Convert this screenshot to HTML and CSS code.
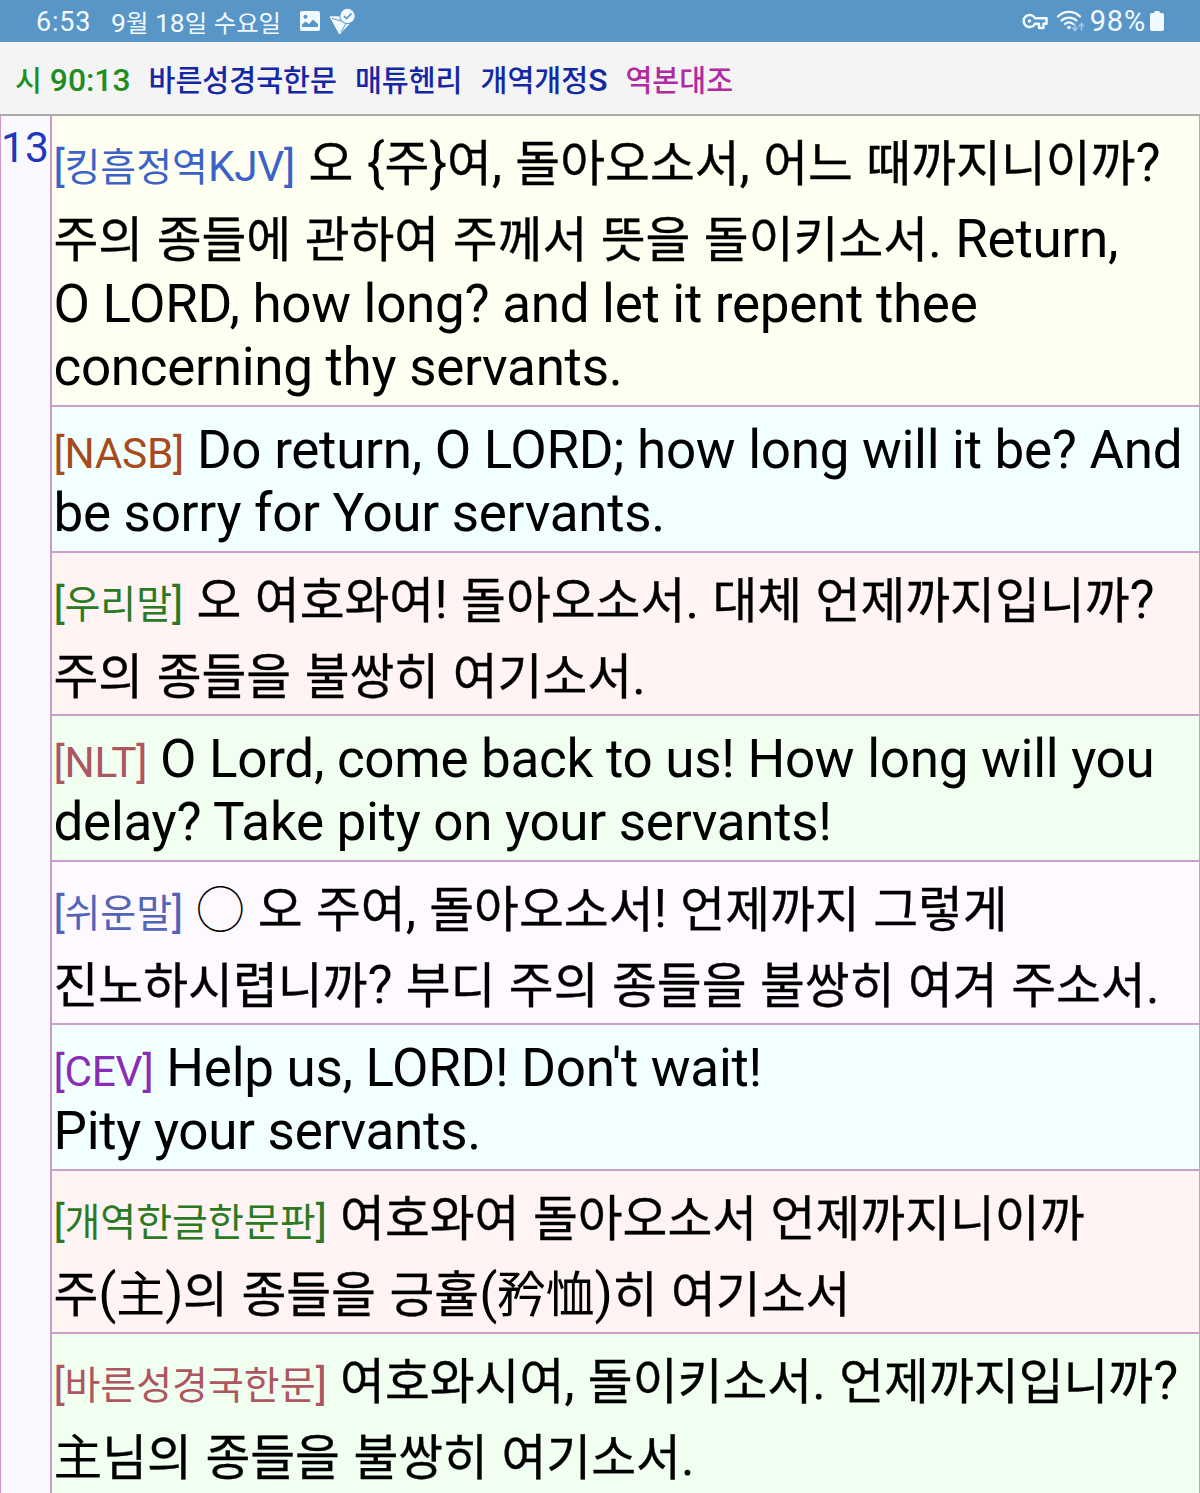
FILE: index.html
```
<!DOCTYPE html>
<html lang="ko">
<head>
    <meta charset="UTF-8">
    <meta name="viewport" content="width=device-width, initial-scale=1.0">
    <title>시 90:13 역본대조</title>
    <link rel="stylesheet" href="styles.css">
</head>
<body>

    <div class="status-bar">
        <span class="clock">6:53</span>
        <span class="date">9<span class="k">월</span> 18<span class="k">일</span> <span class="k">수요일</span></span>
        <svg class="icon-image" width="22" height="22" viewBox="0 0 22 22">
            <path fill="#f2faff" fill-rule="evenodd" d="M3 1h16a2 2 0 0 1 2 2v16a2 2 0 0 1-2 2H3a2 2 0 0 1-2-2V3a2 2 0 0 1 2-2zM3 14.500v2.500h16v-3l-5-4.500-4 4.500-3.500-2.500zM6.500 4.800a2 2 0 1 0 .01 0z"/>
        </svg>
        <svg class="icon-send" width="28" height="28" viewBox="0 0 28 28">
            <path d="M2.500 10h12l6 7-9 9.500z" fill="#f2faff" stroke="#f2faff" stroke-width="1.500" stroke-linejoin="round"/>
            <path d="M4 11.500l9 2.500M13 25l5-8.500" fill="none" stroke="#5996c8" stroke-width="1"/>
            <circle cx="19.500" cy="9" r="8.200" fill="#5996c8"/>
            <circle cx="19.500" cy="9" r="7.200" fill="#f2faff"/>
            <path d="M16 9l2.500 2.500 5-5" fill="none" stroke="#5996c8" stroke-width="1.700"/>
        </svg>
        <div class="status-right">
            <svg class="icon-key" width="27" height="18" viewBox="0 0 27 18" fill="none" stroke="#f2faff" stroke-width="2.500">
                <path d="M13 6.300A6 6 0 1 0 13 11.700H17V16H21.500V11.700H24.500V6.300z" stroke-linejoin="round"/>
                <circle cx="7.500" cy="9" r="1.800" fill="#f2faff" stroke="none"/>
            </svg>
            <svg class="icon-wifi" width="29" height="24" viewBox="0 0 29 24" fill="none" stroke="#f2faff" stroke-width="2.300" stroke-linecap="round">
                <path d="M2 7.500a15.500 15.500 0 0 1 22 0M5.500 11.500a11 11 0 0 1 15 0M9 15a6 6 0 0 1 8 0"/>
                <circle cx="13" cy="18.500" r="1.800" fill="#f2faff" stroke="none"/>
                <path d="M19 15v6M16.800 19l2.200 2.500 2.200-2.500M25.500 21v-6M23.300 17l2.200-2.500 2.200 2.500" stroke="#a3c5e6" stroke-width="1.600"/>
            </svg>
            <span class="percent">98%</span>
            <svg class="icon-battery" width="14" height="20" viewBox="0 0 14 20">
                <path fill="#f2faff" d="M4 2a2 2 0 0 1 2-2h2a2 2 0 0 1 2 2h2a2 2 0 0 1 2 2v14a2 2 0 0 1-2 2H2a2 2 0 0 1-2-2V4a2 2 0 0 1 2-2z"/>
            </svg>
        </div>
    </div>

    <div class="nav">
        <span class="ref"><span class="k">시</span> 90:13</span>
        <span class="book"><span class="k">바른성경국한문</span></span>
        <span class="book"><span class="k">매튜헨리</span></span>
        <span class="book"><span class="k">개역개정</span>S</span>
        <span class="current"><span class="k">역본대조</span></span>
    </div>

    <div class="compare">
        <div class="verse-no">13</div>
        <div class="versions">
            <div class="version kr ivory">
                <div class="line ko"><span class="tag blue">[<span class="k">킹흠정역</span>KJV]</span> <span class="k">오</span> {<span class="k">주</span>}<span class="k">여</span>, <span class="k">돌아오소서</span>, <span class="k">어느</span> <span class="k">때까지니이까</span>?</div>
                <div class="line ko"><span class="k">주의</span> <span class="k">종들에</span> <span class="k">관하여</span> <span class="k">주께서</span> <span class="k">뜻을</span> <span class="k">돌이키소서</span>. Return,</div>
                <div class="line after-ko">O LORD, how long? and let it repent thee</div>
                <div class="line">concerning thy servants.</div>
            </div>
            <div class="version azure">
                <div class="line"><span class="tag brown">[NASB]</span> Do return, O LORD; how long will it be? And</div>
                <div class="line">be sorry for Your servants.</div>
            </div>
            <div class="version kr pink">
                <div class="line ko"><span class="tag green">[<span class="k">우리말</span>]</span> <span class="k">오</span> <span class="k">여호와여</span>! <span class="k">돌아오소서</span>. <span class="k">대체</span> <span class="k">언제까지입니까</span>?</div>
                <div class="line ko"><span class="k">주의</span> <span class="k">종들을</span> <span class="k">불쌍히</span> <span class="k">여기소서</span>.</div>
            </div>
            <div class="version mint">
                <div class="line"><span class="tag rose">[NLT]</span> O Lord, come back to us! How long will you</div>
                <div class="line">delay? Take pity on your servants!</div>
            </div>
            <div class="version kr lilac">
                <div class="line ko"><span class="tag indigo">[<span class="k">쉬운말</span>]</span> <span class="k circle">◯</span> <span class="k">오</span> <span class="k">주여</span>, <span class="k">돌아오소서</span>! <span class="k">언제까지</span> <span class="k">그렇게</span></div>
                <div class="line ko"><span class="k">진노하시렵니까</span>? <span class="k">부디</span> <span class="k">주의</span> <span class="k">종들을</span> <span class="k">불쌍히</span> <span class="k">여겨</span> <span class="k">주소서</span>.</div>
            </div>
            <div class="version azure">
                <div class="line"><span class="tag purple">[CEV]</span> Help us, LORD! Don't wait!</div>
                <div class="line">Pity your servants.</div>
            </div>
            <div class="version kr pink">
                <div class="line ko"><span class="tag green">[<span class="k">개역한글한문판</span>]</span> <span class="k">여호와여</span> <span class="k">돌아오소서</span> <span class="k">언제까지니이까</span></div>
                <div class="line ko"><span class="k">주</span>(<span class="k hanja">主</span>)<span class="k">의</span> <span class="k">종들을</span> <span class="k">긍휼</span>(<span class="k hanja">矜恤</span>)<span class="k">히</span> <span class="k">여기소서</span></div>
            </div>
            <div class="version kr mint">
                <div class="line ko"><span class="tag rose">[<span class="k">바른성경국한문</span>]</span> <span class="k">여호와시여</span>, <span class="k">돌이키소서</span>. <span class="k">언제까지입니까</span>?</div>
                <div class="line ko"><span class="k hanja">主</span><span class="k">님의</span> <span class="k">종들을</span> <span class="k">불쌍히</span> <span class="k">여기소서</span>.</div>
            </div>
        </div>
    </div>

</body>
</html>
```
FILE: styles.css
```
* {
    box-sizing: border-box;
}

body {
    margin: 0;
    height: 1493px;
    overflow: hidden;
    display: flex;
    flex-direction: column;
    background-color: #f4f4f4;
    font-family: Roboto, "Noto Sans CJK KR", sans-serif;
    color: #000;
}

/* Hangul runs are set a little smaller than the latin text */
.k {
    font-family: "Noto Sans CJK KR", sans-serif;
    font-size: 0.92em;
    line-height: 0;
    letter-spacing: 0;
}

/* Status bar */
.status-bar {
    height: 42px;
    flex: none;
    display: flex;
    align-items: center;
    padding: 2px 36px 0;
    background-color: #5996c8;
    color: #f2faff;
    font-size: 26.500px;
    white-space: pre;
}

.clock {
    width: 55px;
    font-size: 27px;
    letter-spacing: 0.800px;
}

.date {
    margin-left: 20px;
}

.icon-image {
    margin-left: 18px;
    margin-top: -3px;
}

.icon-send {
    margin-left: 7px;
    margin-top: -3px;
}

.status-right {
    display: flex;
    align-items: center;
    margin-left: auto;
    margin-top: -3px;
}

.icon-key {
    margin-top: 1px;
}

.icon-wifi {
    margin-left: 7px;
}

.percent {
    margin-left: 5px;
    font-size: 29px;
    letter-spacing: 0.800px;
}

.icon-battery {
    margin-left: 4px;
}

/* Links */
.nav {
    height: 74px;
    flex: none;
    display: flex;
    align-items: center;
    gap: 18px;
    padding: 3px 0 0 15px;
    border-bottom: 2px solid #aaa;
    font-size: 31.800px;
    font-weight: 500;
    white-space: nowrap;
}

.ref {
    color: #1e8e24;
}

.book {
    color: #1428a5;
}

.current {
    color: #b02ba0;
}

/* Verse comparison */
.compare {
    flex: 1;
    display: flex;
    min-height: 0;
    border-left: 1px solid #cc99cc;
    border-right: 1px solid #cc99cc;
}

.verse-no {
    width: 49px;
    padding-top: 7px;
    background-color: #fbf9fd;
    color: #2038c0;
    font-size: 42.500px;
    line-height: 50px;
}

.versions {
    flex: 1;
    border-left: 2px solid #cc99cc;
}

.version {
    padding: 12px 0 5.400px 1.500px;
    border-bottom: 2px solid #c8a0c8;
}

.version.kr {
    padding-top: 2.700px;
    padding-bottom: 5.700px;
}

.line {
    height: 63.300px;
    font-size: 53px;
    line-height: 63.300px;
    letter-spacing: -0.300px;
    white-space: nowrap;
}

.line.ko {
    height: 76.300px;
    padding-top: 13px;
    word-spacing: 0.600px;
}

.line.after-ko {
    margin-top: 1.400px;
}

.line .k {
    -webkit-text-stroke: 0.350px;
}

.line .hanja,
.line .circle {
    -webkit-text-stroke: 0;
}

.line .circle {
    font-size: 0.900em;
}

.tag {
    font-size: 42.400px;
    line-height: 0;
}

.tag .k {
    -webkit-text-stroke: 0;
}

.ivory { background-color: #fffff1; }
.azure { background-color: #f1ffff; }
.pink { background-color: #fff3f3; }
.mint { background-color: #f0fff0; }
.lilac { background-color: #fef8ff; }

.blue { color: #3a62c8; }
.brown { color: #a84a1c; }
.green { color: #2a7a24; }
.rose { color: #ad5560; }
.indigo { color: #5064b8; }
.purple { color: #8a2cb4; }
```
